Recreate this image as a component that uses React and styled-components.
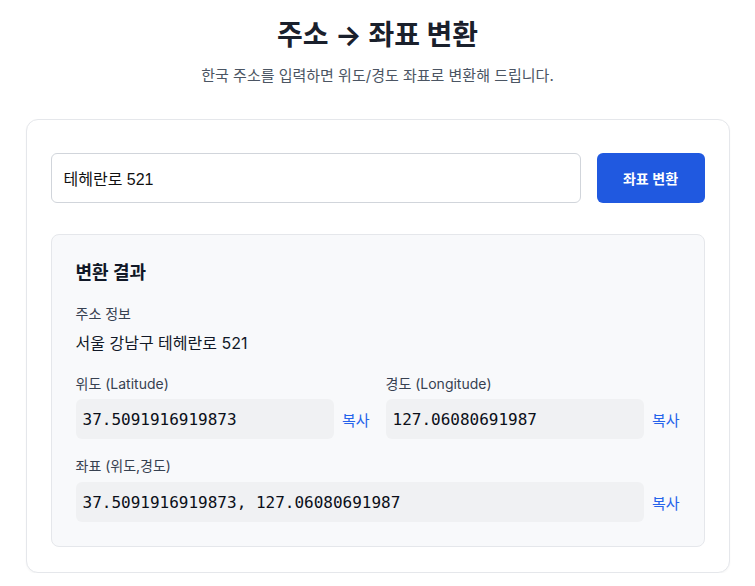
import React from "react";
import styled, { createGlobalStyle } from "styled-components";

const GlobalStyle = createGlobalStyle`
  * { box-sizing: border-box; }
  body {
    margin: 0;
    background: #ffffff;
    font-family: "Inter", "Noto Sans CJK KR", sans-serif;
    color: #111827;
  }
`;

const Page = styled.div`
  width: 704px;
  margin: 0 auto;
  padding-top: 15px;
`;

const Header = styled.header`
  text-align: center;
  margin-bottom: 32px;
`;

const Title = styled.h1`
  margin: 0;
  font-size: 28px;
  line-height: 40px;
  font-weight: 700;
  color: #1a202c;
`;

const Subtitle = styled.p`
  margin: 10px 0 0;
  font-size: 15px;
  line-height: 22px;
  color: #4b5563;
`;

const Card = styled.section`
  background: #fff;
  border: 1px solid #e5e7eb;
  border-radius: 12px;
  padding: 33px 24px 25px;
  box-shadow: 0 1px 2px rgba(0, 0, 0, 0.04);
`;

const Form = styled.form`
  display: flex;
  gap: 16px;
  margin-bottom: 31px;
`;

const Input = styled.input`
  flex: 1;
  height: 50px;
  border: 1px solid #d1d5db;
  border-radius: 6px;
  padding: 0 12px;
  font-family: "Liberation Sans", "Noto Sans CJK KR", sans-serif;
  font-size: 16px;
  color: #111;
  outline: none;
`;

const Button = styled.button`
  width: 108px;
  height: 50px;
  border: none;
  border-radius: 6px;
  background: #2059e0;
  color: #fff;
  font-family: inherit;
  font-size: 14px;
  font-weight: 600;
  cursor: pointer;
`;

const Result = styled.div`
  background: #f8f9fb;
  border: 1px solid #e5e7eb;
  border-radius: 8px;
  padding: 24px;
`;

const ResultTitle = styled.h2`
  margin: 0 0 17px;
  font-size: 18px;
  line-height: 28px;
  font-weight: 700;
  color: #111827;
`;

const Label = styled.div`
  font-size: 14px;
  line-height: 20px;
  color: #374151;
  margin-bottom: ${(p) => p.$gap || 6}px;
`;

const Address = styled.div`
  font-size: 16px;
  line-height: 24px;
  color: #111827;
  margin-bottom: 19px;
`;

const Grid = styled.div`
  display: grid;
  grid-template-columns: 1fr 1fr;
  gap: 16px;
  margin-bottom: 17px;
`;

const Field = styled.div`
  display: flex;
  flex-direction: column;
`;

const ValueRow = styled.div`
  display: flex;
  align-items: center;
  gap: 8px;
`;

const Code = styled.div`
  flex: 1;
  height: 40px;
  display: flex;
  align-items: center;
  padding: 0 7px;
  background: #f0f1f3;
  border-radius: 6px;
  font-family: "DejaVu Sans Mono", monospace;
  font-size: 16px;
  color: #0b0f19;
`;

const Copy = styled.button`
  border: none;
  background: none;
  padding: 0;
  font-family: inherit;
  font-size: 15px;
  color: #2563eb;
  cursor: pointer;
`;

function Value({ children }) {
  return (
    <ValueRow>
      <Code>{children}</Code>
      <Copy type="button">복사</Copy>
    </ValueRow>
  );
}

export default function App() {
  const lat = "37.5091916919873";
  const lng = "127.06080691987";
  return (
    <Page>
      <GlobalStyle />
      <Header>
        <Title>주소 → 좌표 변환</Title>
        <Subtitle>한국 주소를 입력하면 위도/경도 좌표로 변환해 드립니다.</Subtitle>
      </Header>
      <Card>
        <Form onSubmit={(e) => e.preventDefault()}>
          <Input defaultValue="테헤란로 521" />
          <Button type="submit">좌표 변환</Button>
        </Form>
        <Result>
          <ResultTitle>변환 결과</ResultTitle>
          <Label $gap={7}>주소 정보</Label>
          <Address>서울 강남구 테헤란로 521</Address>
          <Grid>
            <Field>
              <Label $gap={5}>위도 (Latitude)</Label>
              <Value>{lat}</Value>
            </Field>
            <Field>
              <Label $gap={5}>경도 (Longitude)</Label>
              <Value>{lng}</Value>
            </Field>
          </Grid>
          <Field>
            <Label>좌표 (위도,경도)</Label>
            <Value>{`${lat}, ${lng}`}</Value>
          </Field>
        </Result>
      </Card>
    </Page>
  );
}
